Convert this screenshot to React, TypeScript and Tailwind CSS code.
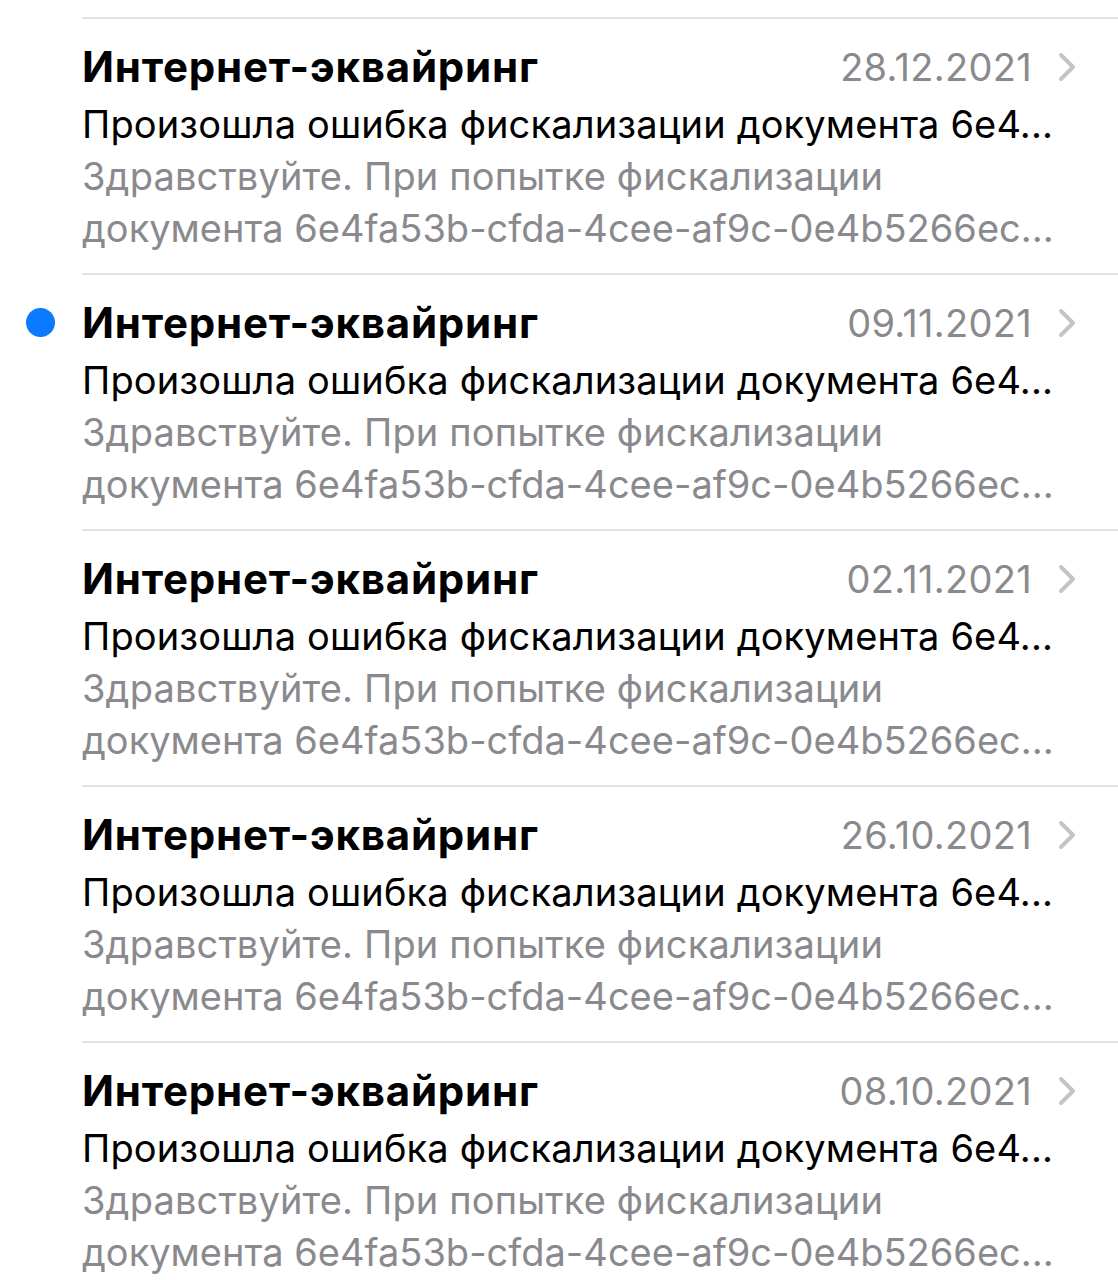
import React from 'react';

type Mail = {
  date: string;
  unread?: boolean;
};

const mails: Mail[] = [
  { date: '28.12.2021' },
  { date: '09.11.2021', unread: true },
  { date: '02.11.2021' },
  { date: '26.10.2021' },
  { date: '08.10.2021' },
];

const Chevron = () => (
  <svg width="18" height="30" viewBox="0 0 18 30" fill="none" className="shrink-0">
    <path d="M3 3 L15 15 L3 27" stroke="#c4c4c7" strokeWidth="4" strokeLinecap="round" strokeLinejoin="round" />
  </svg>
);

const MailRow: React.FC<{ mail: Mail }> = ({ mail }) => (
  <div className="relative pl-[82px]">
    {/* Unread dot */}
    {mail.unread && (
      <div className="absolute left-[26px] top-[35px] w-[29px] h-[29px] rounded-full bg-[#0a7bff]" />
    )}
    <div className="border-t-2 border-[#e3e3e5] pt-[22px] pb-[19px] pr-[42px]">
      <div className="flex items-center h-[52px]">
        <div className="flex-1 text-[42px] font-bold text-black leading-[52px] tracking-[0.8px]">
          Интернет-эквайринг
        </div>
        <div className="text-[38px] text-[#8a8a8e] leading-[52px] mr-[26px] tracking-[0.3px]">{mail.date}</div>
        <Chevron />
      </div>
      <div className="mt-[5px] text-[38px] leading-[52px] text-black whitespace-nowrap overflow-hidden tracking-[0.15px]">
        Произошла ошибка фискализации документа 6e4...
      </div>
      <div className="text-[38px] leading-[52px] text-[#8a8a8e] whitespace-nowrap overflow-hidden tracking-[0.15px]">
        Здравствуйте. При попытке фискализации
      </div>
      <div className="text-[38px] leading-[52px] text-[#8a8a8e] whitespace-nowrap overflow-hidden">
        документа 6e4fa53b-cfda-4cee-af9c-0e4b5266ec...
      </div>
    </div>
  </div>
);

export default function App() {
  return (
    <div className="w-[1118px] h-[1280px] bg-white overflow-hidden pt-[17px] font-['Inter',sans-serif]">
      {mails.map((mail, i) => (
        <MailRow key={i} mail={mail} />
      ))}
    </div>
  );
}
